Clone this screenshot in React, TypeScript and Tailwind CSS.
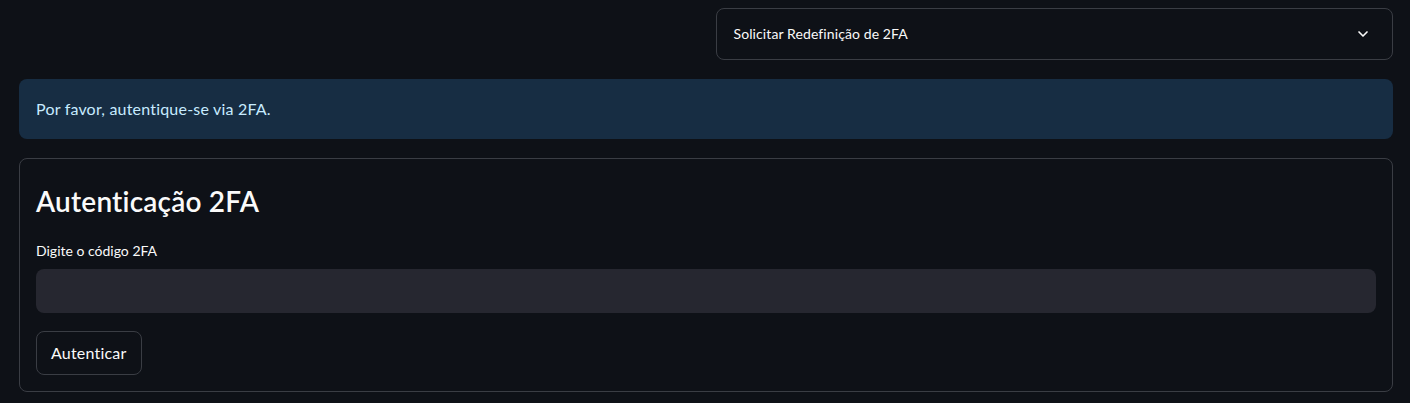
import { ChevronDown } from "lucide-react"

export default function App() {
  return (
    <div className="min-h-[403px] bg-[#0e1117] pl-[19px] pr-[17px] pt-2 pb-3 font-['Lato','Noto_Sans',sans-serif] text-[#fafafa]">
      <div className="flex flex-col gap-[19px]">
        {/* Top row: empty column + expander */}
        <div className="grid grid-cols-2 gap-[19px]">
          <div />
          <div className="flex h-[52px] items-center justify-between rounded-lg border border-[#3a3d44] pl-[17px] pr-[21px]">
            <span className="text-sm tracking-[0.1px]">Solicitar Redefinição de 2FA</span>
            <ChevronDown className="h-4 w-4 text-[#fafafa]" strokeWidth={2.5} />
          </div>
        </div>

        {/* Info alert */}
        <div className="flex h-[60px] items-center rounded-lg bg-[#172d43] px-[17px] text-base tracking-[0.2px] text-[#c7ebff]">
          Por favor, autentique-se via 2FA.
        </div>

        {/* Form */}
        <div className="flex h-[234px] flex-col rounded-lg border border-[#3a3d44] px-[16px] pt-[23px]">
          <h3 className="text-[28px] leading-[38px] font-semibold tracking-[0.2px]">Autenticação 2FA</h3>
          <label className="mt-[20px] text-sm leading-[22px]">Digite o código 2FA</label>
          <input className="mt-[7px] h-[44px] w-full rounded-lg bg-[#262730] px-3 text-sm outline-none" />
          <div className="mt-[18px]">
            <button className="h-[44px] rounded-lg border border-[#3a3d44] px-[14px] text-base tracking-[0.2px]">Autenticar</button>
          </div>
        </div>
      </div>
    </div>
  )
}
